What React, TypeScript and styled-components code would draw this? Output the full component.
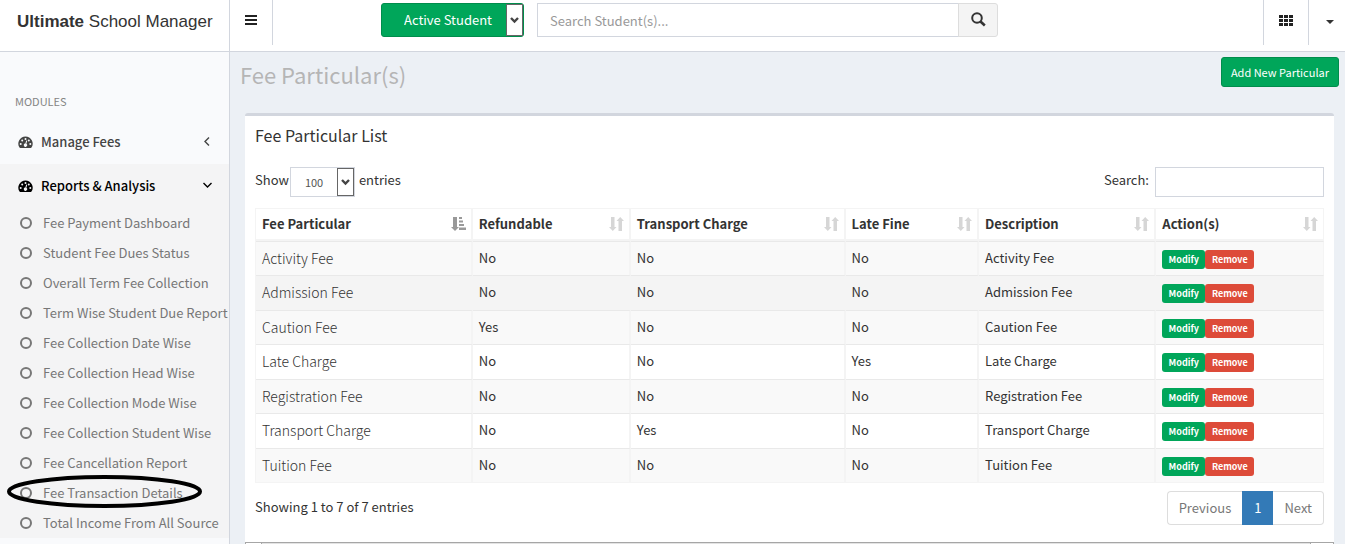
import React from "react";
import styled, { createGlobalStyle, css } from "styled-components";

const GlobalStyle = createGlobalStyle`
  *, *::before, *::after { box-sizing: border-box; }
  body {
    margin: 0;
    height: 100vh;
    overflow: hidden;
    background: #ecf0f5;
    color: #333;
    font: 400 13px/20px "Noto Sans CJK SC", "Noto Sans", sans-serif;
  }
  button, input, select { font: inherit; color: inherit; margin: 0; }
  button { cursor: pointer; }
  a { color: inherit; text-decoration: none; }
  ul { list-style: none; margin: 0; padding: 0; }
  h1, h2 { margin: 0; font-weight: 400; }
`;

const Page = styled.div`
  display: grid;
  grid-template-columns: 230px minmax(0, 1fr);
  grid-template-rows: 52px minmax(0, 1fr);
  height: 100vh;
`;

const Logo = styled.a`
  display: flex;
  align-items: center;
  padding: 0 0 8px 17px;
  background: #fff;
  border-right: 1px solid #d2d6de;
  border-bottom: 1px solid #d2d6de;
  font: 400 17px/20px "Liberation Sans", Arial, sans-serif;
  white-space: pre;
`;

const TopBar = styled.header`
  display: flex;
  align-items: flex-start;
  background: #fff;
  border-bottom: 1px solid #d2d6de;
`;

const BarButton = styled.button<{ $side: "left" | "right"; $width: number }>`
  display: flex;
  align-items: center;
  justify-content: center;
  flex: none;
  width: ${(p) => p.$width}px;
  height: 45px;
  padding: 0 0 5px;
  border: 0 solid #d2d6de;
  ${(p) => (p.$side === "left" ? css`border-right-width: 1px;` : css`border-left-width: 1px;`)}
  background: none;
`;

const AccountButton = styled(BarButton)`
  padding: 0 0 2px 6px;
`;

const SearchForm = styled.form`
  display: flex;
  flex: 1;
  padding: 3px 16px 0 108px;
`;

const SelectWrap = styled.span<{ $tone: "green" | "plain" }>`
  position: relative;
  display: inline-block;
  flex: none;
  width: ${(p) => (p.$tone === "green" ? 143 : 65)}px;
  height: ${(p) => (p.$tone === "green" ? 34 : 30)}px;
  select {
    appearance: none;
    width: 100%;
    height: 100%;
    border-radius: ${(p) => (p.$tone === "green" ? 3 : 0)}px;
    border: 1px solid ${(p) => (p.$tone === "green" ? "#008d4c" : "#d2d6de")};
    background: ${(p) => (p.$tone === "green" ? "#00a65a" : "#fff")};
    color: ${(p) => (p.$tone === "green" ? "#fff" : "#555")};
    padding: 0 18px 0 ${(p) => (p.$tone === "green" ? 22 : 14)}px;
    font-size: ${(p) => (p.$tone === "green" ? 13 : 11)}px;
  }
  svg {
    position: absolute;
    top: 1px;
    right: 1px;
    width: 17px;
    height: calc(100% - 2px);
    border: 1px solid #666;
    background: #fff;
    pointer-events: none;
  }
`;

const SearchInput = styled.input`
  flex: 0 1 422px;
  min-width: 0;
  height: 34px;
  margin-left: 13px;
  padding: 0 12px;
  border: 1px solid #d2d6de;
  background: #fff;
  &::placeholder { color: #999; opacity: 1; }
`;

const SearchButton = styled.button`
  display: flex;
  align-items: center;
  justify-content: center;
  width: 40px;
  height: 34px;
  margin-left: -1px;
  padding: 0 0 2px;
  border: 1px solid #ddd;
  border-radius: 0 3px 3px 0;
  background: #f4f4f4;
`;

const Sidebar = styled.nav`
  background: #f9fafc;
  border-right: 1px solid #d2d6de;
  overflow: hidden;
`;

const SidebarHeading = styled.div`
  padding: 39px 15px 9px;
  color: #848484;
  font-size: 11px;
`;

const Module = styled.li<{ $open?: boolean }>`
  background: ${(p) => (p.$open ? "#f4f4f5" : "transparent")};
  color: ${(p) => (p.$open ? "#000" : "#444")};
`;

const ModuleLink = styled.a`
  display: flex;
  align-items: center;
  height: 44px;
  padding: 0 16px 0 18px;
  font-weight: 500;
  span { flex: 1; margin-left: 8px; }
`;

const SubItem = styled.li`
  position: relative;
  a {
    display: flex;
    align-items: center;
    height: 30px;
    padding-left: 20px;
    color: #777;
    white-space: nowrap;
  }
  a > svg { flex: none; margin-right: 11px; }
`;

const Highlight = styled.svg`
  position: absolute;
  left: 7px;
  top: -3px;
  width: 195px;
  height: 33px;
  pointer-events: none;
`;

const Content = styled.main`
  min-width: 0;
  overflow: hidden;
`;

const ContentHeader = styled.div`
  display: flex;
  justify-content: space-between;
  align-items: flex-start;
  height: 61px;
  padding: 5px 6px 0 10px;
  h1 { padding-top: 2px; color: #b5b5b5; font-size: 22px; line-height: 30px; }
`;

const AddButton = styled.button`
  height: 30px;
  padding: 0 9px;
  border: 1px solid #008d4c;
  border-radius: 3px;
  background: #00a65a;
  color: #fff;
  font-size: 11px;
`;

const Box = styled.section`
  margin: 0 11px 0 15px;
  border-top: 3px solid #d2d6de;
  border-radius: 3px 3px 0 0;
  background: #fff;
  h2 { padding: 9px 10px 11px; font-size: 16px; line-height: 20px; }
`;

const BoxBody = styled.div`
  padding: 11px 10px 0;
`;

const Controls = styled.div`
  display: flex;
  justify-content: space-between;
  height: 41px;
  label { display: flex; align-items: flex-start; line-height: 26px; }
  label > span:nth-child(2) { margin: 0 4px 0 1px; }
`;

const FilterInput = styled.input`
  width: 169px;
  height: 30px;
  margin-left: 6px;
  padding: 0 10px;
  border: 1px solid #d2d6de;
  background: #fff;
`;

const Table = styled.table`
  width: 100%;
  table-layout: fixed;
  border-collapse: separate;
  border-spacing: 0;
  border: 1px solid #f4f4f4;
  border-right-width: 0;
  th, td {
    padding: 0 6px;
    border: 0 solid #f4f4f4;
    border-right-width: 2px;
    text-align: left;
  }
  th:last-child, td:last-child { border-right-width: 1px; }
  th { height: 32px; border-bottom-width: 2px; font-weight: 700; }
  th > div { display: flex; justify-content: space-between; align-items: center; }
  th svg { flex: none; margin-right: -1px; }
  td { height: 34px; padding-bottom: 2px; border-top: 1px solid #e9e9e9; }
  tbody tr:nth-child(even) td { height: 35px; }
  tbody tr:nth-child(odd) { background: #f9f9f9; }
  tbody tr:nth-child(2) { background: #f4f4f4; }
  td:first-child { font-size: 14px; font-weight: 300; }
`;

const Actions = styled.div`
  display: flex;
  padding-top: 3px;
`;

const ActionButton = styled.button<{ $danger?: boolean }>`
  width: ${(p) => (p.$danger ? 49 : 43)}px;
  height: 19px;
  padding: 0;
  border: 0;
  border-radius: 3px;
  background: ${(p) => (p.$danger ? "#dd4b39" : "#00a65a")};
  color: #fff;
  font-size: 9px;
  font-weight: 700;
  line-height: 19px;
`;

const TableFooter = styled.div`
  display: flex;
  justify-content: space-between;
  height: 59px;
  padding-top: 8px;
  p { margin: 0; padding-top: 6px; }
`;

const Pagination = styled.ul`
  display: flex;
  height: 34px;
  button {
    height: 34px;
    padding: 0 11px;
    border: 1px solid #ddd;
    background: #fff;
    color: #777;
  }
  li:first-child button { border-radius: 4px 0 0 4px; border-right: 0; }
  li:last-child button { border-radius: 0 4px 4px 0; border-left: 0; }
  button[aria-current] { border-color: #337ab7; background: #337ab7; color: #fff; }
`;

const ScrollTrack = styled.div`
  display: flex;
  height: 17px;
  border: 1px solid #a6a6a6;
  background: #e3e3e3;
  &::before { content: ""; width: 16px; background: #fff; border-right: 1px solid #a6a6a6; }
  &::after { content: ""; width: 23px; margin-left: auto; background: #fff; border-left: 1px solid #a6a6a6; }
`;

const DropArrow = () => (
  <svg viewBox="0 0 15 15" aria-hidden="true">
    <path d="M4 5.500L7.500 9 11 5.500" fill="none" stroke="#444" strokeWidth="2.400" />
  </svg>
);

const Gauge = () => (
  <svg width="15" height="12" viewBox="0 0 15 12" aria-hidden="true">
    <path
      fill="currentColor"
      fillRule="evenodd"
      d="M7.500 .5A7.200 7.200 0 0 0 1.500 11.600q.2.400.7.400h10.600q.5 0 .7-.4A7.200 7.200 0 0 0 7.500.5zM2.700 7a1 1 0 1 0 0 2 1 1 0 0 0 0-2zM4.200 3.400a1 1 0 1 0 0 2 1 1 0 0 0 0-2zM7.500 2a1 1 0 1 0 0 2 1 1 0 0 0 0-2zM10.800 3.400a1 1 0 1 0 0 2 1 1 0 0 0 0-2zM12.300 7a1 1 0 1 0 0 2 1 1 0 0 0 0-2zM8.200 4.600L7.400 7.500a1.600 1.600 0 1 0 1 .3l.8-3z"
    />
  </svg>
);

const Chevron = ({ open }: { open?: boolean }) => (
  <svg width="12" height="12" viewBox="0 0 12 12" aria-hidden="true">
    <path d={open ? "M2.500 3l4 4 4-4" : "M8 1.500L4 5.500 8 9.500"} fill="none" stroke="currentColor" strokeWidth="1.400" />
  </svg>
);

const Ring = () => (
  <svg width="12" height="12" viewBox="0 0 12 12" aria-hidden="true">
    <circle cx="6" cy="6" r="5" fill="none" stroke="currentColor" strokeWidth="2" />
  </svg>
);

const SortIcon = ({ active }: { active?: boolean }) =>
  active ? (
    <svg width="15" height="14" viewBox="0 0 15 14" fill="#999" aria-hidden="true">
      <path d="M2 0h4v10h2l-4 4-4-4h2zM8 0h3v2H8zM8 3.500h4v2H8zM8 7h5v2H8zM8 10.500h7v2.500H8z" />
    </svg>
  ) : (
    <svg width="15" height="14" viewBox="0 0 15 14" fill="#d6d6d6" aria-hidden="true">
      <path d="M2 0h3.500v10h2l-3.700 4L0 10h2zM9.500 14H13V4h2l-3.800-4-3.700 4h2z" />
    </svg>
  );

const reports = [
  "Fee Payment Dashboard",
  "Student Fee Dues Status",
  "Overall Term Fee Collection",
  "Term Wise Student Due Report",
  "Fee Collection Date Wise",
  "Fee Collection Head Wise",
  "Fee Collection Mode Wise",
  "Fee Collection Student Wise",
  "Fee Cancellation Report",
  "Fee Transaction Details",
  "Total Income From All Source",
];

const columns = [
  { label: "Fee Particular", width: "20.300%" },
  { label: "Refundable", width: "14.800%" },
  { label: "Transport Charge", width: "20.100%" },
  { label: "Late Fine", width: "12.500%" },
  { label: "Description", width: "16.600%" },
  { label: "Action(s)", width: "15.700%" },
];

const rows = [
  ["Activity Fee", "No", "No", "No"],
  ["Admission Fee", "No", "No", "No"],
  ["Caution Fee", "Yes", "No", "No"],
  ["Late Charge", "No", "No", "Yes"],
  ["Registration Fee", "No", "No", "No"],
  ["Transport Charge", "No", "Yes", "No"],
  ["Tuition Fee", "No", "No", "No"],
];

export default function App() {
  return (
    <Page>
      <GlobalStyle />
      <Logo href="#">
        <b>Ultimate</b> School Manager
      </Logo>
      <TopBar>
        <BarButton $side="left" $width={43} aria-label="Toggle navigation">
          <svg width="12" height="10" viewBox="0 0 12 10" fill="#222" aria-hidden="true">
            <path d="M0 0h12v2H0zM0 4h12v2H0zM0 8h12v2H0z" />
          </svg>
        </BarButton>
        <SearchForm onSubmit={(e) => e.preventDefault()}>
          <SelectWrap $tone="green">
            <select aria-label="Student status">
              <option>Active Student</option>
            </select>
            <DropArrow />
          </SelectWrap>
          <SearchInput type="text" aria-label="Search students" placeholder="Search Student(s)..." />
          <SearchButton aria-label="Search">
            <svg width="15" height="15" viewBox="0 0 15 15" fill="none" stroke="#333" aria-hidden="true">
              <circle cx="6" cy="6" r="4.800" strokeWidth="2" />
              <path d="M9.500 9.500l4.300 4" strokeWidth="2.600" />
            </svg>
          </SearchButton>
        </SearchForm>
        <BarButton $side="right" $width={45} aria-label="Applications">
          <svg width="14" height="11" viewBox="0 0 14 11" fill="#222" aria-hidden="true">
            <path d="M0 0h4v3H0zM5 0h4v3H5zM10 0h4v3h-4zM0 4h4v3H0zM5 4h4v3H5zM10 4h4v3h-4zM0 8h4v3H0zM5 8h4v3H5zM10 8h4v3h-4z" />
          </svg>
        </BarButton>
        <AccountButton $side="right" $width={37} aria-label="Account menu">
          <svg width="8" height="4" viewBox="0 0 8 4" fill="#333" aria-hidden="true">
            <path d="M0 0h8L4 4z" />
          </svg>
        </AccountButton>
      </TopBar>

      <Sidebar>
        <SidebarHeading>MODULES</SidebarHeading>
        <ul>
          <Module>
            <ModuleLink href="#">
              <Gauge />
              <span>Manage Fees</span>
              <Chevron />
            </ModuleLink>
          </Module>
          <Module $open>
            <ModuleLink href="#">
              <Gauge />
              <span>Reports &amp; Analysis</span>
              <Chevron open />
            </ModuleLink>
            <ul>
              {reports.map((name) => (
                <SubItem key={name}>
                  <a href="#">
                    <Ring />
                    {name}
                  </a>
                  {name === "Fee Transaction Details" && (
                    <Highlight viewBox="0 0 195 33" aria-hidden="true">
                      <ellipse cx="97.500" cy="16.500" rx="95.500" ry="14.500" fill="none" stroke="#000" strokeWidth="4" />
                    </Highlight>
                  )}
                </SubItem>
              ))}
            </ul>
          </Module>
        </ul>
      </Sidebar>

      <Content>
        <ContentHeader>
          <h1>Fee Particular(s)</h1>
          <AddButton>Add New Particular</AddButton>
        </ContentHeader>
        <Box>
          <h2>Fee Particular List</h2>
          <BoxBody>
            <Controls>
              <label>
                <span>Show</span>
                <SelectWrap $tone="plain">
                  <select defaultValue="100">
                    <option>100</option>
                  </select>
                  <DropArrow />
                </SelectWrap>
                <span>entries</span>
              </label>
              <label>
                Search:
                <FilterInput type="search" />
              </label>
            </Controls>
            <Table>
              <colgroup>
                {columns.map((c) => (
                  <col key={c.label} style={{ width: c.width }} />
                ))}
              </colgroup>
              <thead>
                <tr>
                  {columns.map((c, i) => (
                    <th key={c.label} scope="col">
                      <div>
                        {c.label}
                        <SortIcon active={i === 0} />
                      </div>
                    </th>
                  ))}
                </tr>
              </thead>
              <tbody>
                {rows.map(([name, refundable, transport, fine]) => (
                  <tr key={name}>
                    <td>{name}</td>
                    <td>{refundable}</td>
                    <td>{transport}</td>
                    <td>{fine}</td>
                    <td>{name}</td>
                    <td>
                      <Actions>
                        <ActionButton>Modify</ActionButton>
                        <ActionButton $danger>Remove</ActionButton>
                      </Actions>
                    </td>
                  </tr>
                ))}
              </tbody>
            </Table>
            <TableFooter>
              <p>Showing 1 to 7 of 7 entries</p>
              <Pagination>
                <li><button>Previous</button></li>
                <li><button aria-current="page">1</button></li>
                <li><button>Next</button></li>
              </Pagination>
            </TableFooter>
          </BoxBody>
          <ScrollTrack />
        </Box>
      </Content>
    </Page>
  );
}
